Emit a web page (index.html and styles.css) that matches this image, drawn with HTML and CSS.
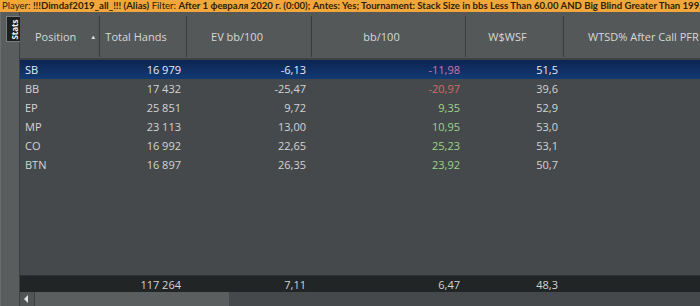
FILE: index.html
```html
<!DOCTYPE html>
<html>

<head>
    <title>Stats</title>
    <meta charset="utf-8" />
    <link rel="stylesheet" href="styles.css">
</head>

<body>

    <div class="filterBar">
        Player: <b>!!!Dimdaf2019_all_!!! (Alias)</b> Filter: <b>After 1 февраля 2020 г. (0:00); Antes: Yes; Tournament: Stack Size in bbs Less Than 60.00 AND Big Blind Greater Than 199.00</b>
    </div>

    <div class="main">
        <div class="sideStrip">
            <div class="statsTab"><span>Stats</span></div>
        </div>

        <div class="grid">
            <div class="row head">
                <div class="cell c1">Position <span class="sortArrow">&#9650;</span></div>
                <div class="cell c2">Total Hands</div>
                <div class="cell c3 ev">EV bb/100</div>
                <div class="cell c4">bb/100</div>
                <div class="cell c5">W$WSF</div>
                <div class="cell c6">WTSD% After Call PFR Squeeze</div>
            </div>

            <div class="rows">
                <div class="row selected">
                    <div class="cell c1">SB</div>
                    <div class="cell c2">16 979</div>
                    <div class="cell c3">-6,13</div>
                    <div class="cell c4 negSel">-11,98</div>
                    <div class="cell c5">51,5</div>
                    <div class="cell c6"></div>
                </div>
                <div class="row">
                    <div class="cell c1">BB</div>
                    <div class="cell c2">17 432</div>
                    <div class="cell c3">-25,47</div>
                    <div class="cell c4 neg">-20,97</div>
                    <div class="cell c5">39,6</div>
                    <div class="cell c6"></div>
                </div>
                <div class="row">
                    <div class="cell c1">EP</div>
                    <div class="cell c2">25 851</div>
                    <div class="cell c3">9,72</div>
                    <div class="cell c4 pos">9,35</div>
                    <div class="cell c5">52,9</div>
                    <div class="cell c6"></div>
                </div>
                <div class="row">
                    <div class="cell c1">MP</div>
                    <div class="cell c2">23 113</div>
                    <div class="cell c3">13,00</div>
                    <div class="cell c4 pos">10,95</div>
                    <div class="cell c5">53,0</div>
                    <div class="cell c6"></div>
                </div>
                <div class="row">
                    <div class="cell c1">CO</div>
                    <div class="cell c2">16 992</div>
                    <div class="cell c3">22,65</div>
                    <div class="cell c4 pos">25,23</div>
                    <div class="cell c5">53,1</div>
                    <div class="cell c6"></div>
                </div>
                <div class="row">
                    <div class="cell c1">BTN</div>
                    <div class="cell c2">16 897</div>
                    <div class="cell c3">26,35</div>
                    <div class="cell c4 pos">23,92</div>
                    <div class="cell c5">50,7</div>
                    <div class="cell c6"></div>
                </div>
            </div>

            <div class="row totals">
                <div class="cell c1"></div>
                <div class="cell c2">117 264</div>
                <div class="cell c3">7,11</div>
                <div class="cell c4">6,47</div>
                <div class="cell c5">48,3</div>
                <div class="cell c6"></div>
            </div>

            <div class="hScroll">
                <div class="arrowBtn"></div>
                <div class="thumb"></div>
            </div>
        </div>
    </div>

</body>

</html>
```

FILE: styles.css
```css
body {
    margin: 0;
    width: 700px;
    height: 306px;
    overflow: hidden;
    background-color: #46494b;
    font-family: "Open Sans", "Noto Sans", sans-serif;
    font-size: 11px;
    color: #d2d4d4;
}

div.filterBar {
    height: 12px;
    line-height: 12px;
    padding-left: 2px;
    background-color: #f2a73c;
    color: #2e1f06;
    font-family: Lato, "Open Sans", sans-serif;
    font-size: 9.6px;
    white-space: nowrap;
    overflow: hidden;
}

div.filterBar b {
    font-weight: bold;
}

div.main {
    display: flex;
    height: 294px;
}

div.sideStrip {
    width: 20px;
    flex: none;
    background-color: #5a5d5e;
    border-left: 1px solid #6a6d6e;
    border-right: 1px solid #3d4041;
    box-sizing: border-box;
    padding-top: 4px;
}

div.statsTab {
    margin-left: 5px;
    width: 15px;
    height: 26px;
    background-color: #1c1e1f;
    border: 1px solid #7a7d7e;
    border-right: none;
    box-sizing: border-box;
    display: flex;
    align-items: center;
    justify-content: center;
}

div.statsTab span {
    display: block;
    transform: rotate(-90deg);
    font-size: 8px;
    font-weight: bold;
    color: #f4f4f4;
    white-space: nowrap;
}

div.grid {
    flex: 1;
    display: flex;
    flex-direction: column;
    overflow: hidden;
}

div.row {
    display: flex;
    height: 19px;
    align-items: center;
    white-space: nowrap;
}

div.cell {
    flex: none;
    box-sizing: border-box;
    text-align: right;
    padding-right: 6px;
}

div.c1 { width: 80px; text-align: left; padding-left: 5px; }
div.c2 { width: 87px; }
div.c3 { width: 125px; }
div.c4 { width: 154px; }
div.c5 { width: 98px; }
div.c6 { width: 220px; }

div.head {
    height: 46px;
    align-items: stretch;
    background-color: #555859;
    border-bottom: 2px solid #3f4243;
}

div.head div.cell {
    display: flex;
    align-items: center;
    justify-content: center;
    padding: 0 14px 0 0;
    margin: 4px 0 1px 0;
    border-right: 1px solid #3a3c3d;
    color: #d6d8d8;
    font-size: 11px;
}

div.head div.c1 {
    justify-content: flex-start;
    padding-left: 15px;
}

div.head div.ev {
    padding-right: 24px;
}

div.head div.c6 {
    justify-content: flex-start;
    padding-left: 24px;
    border-right: none;
}

span.sortArrow {
    font-size: 6px;
    margin-left: 14px;
    color: #e0e0e0;
}

div.rows {
    flex: 1;
}

div.selected {
    background: linear-gradient(#0c2452, #123a74);
    color: #e6ecf4;
}

div.neg {
    color: #d46a6a;
}

div.negSel {
    color: #d872a6;
}

div.pos {
    color: #9ad68a;
}

div.totals {
    height: 17px;
    flex: none;
    background-color: #222526;
    border-top: 1px solid #2e3132;
    box-sizing: border-box;
}

div.hScroll {
    height: 14px;
    flex: none;
    display: flex;
    background-color: #46494b;
}

div.arrowBtn {
    width: 14px;
    background-color: #525556;
    border-right: 1px solid #3d4041;
    position: relative;
}

div.arrowBtn::after {
    content: "";
    position: absolute;
    left: 4px;
    top: 3px;
    border-top: 4px solid transparent;
    border-bottom: 4px solid transparent;
    border-right: 4px solid #e4e4e4;
}

div.thumb {
    width: 194px;
    background-color: #5b5e5f;
}
```
